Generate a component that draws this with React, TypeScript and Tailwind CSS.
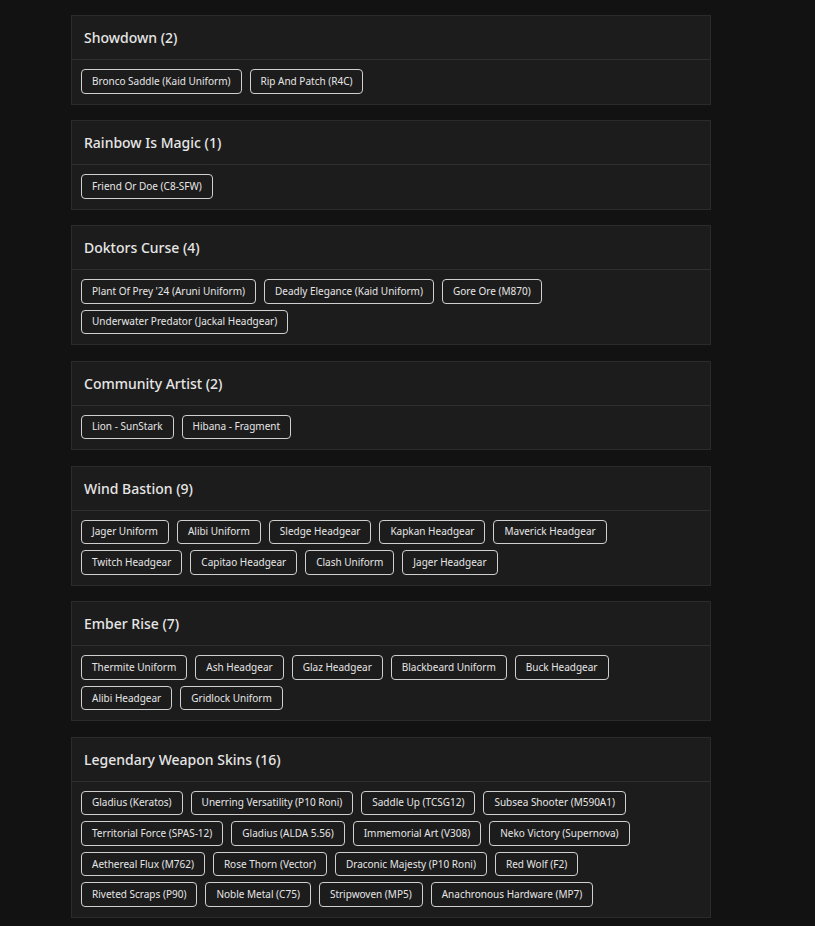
import React from "react";

const groups: { title: string; items: string[] }[] = [
  { title: "Showdown (2)", items: ["Bronco Saddle (Kaid Uniform)", "Rip And Patch (R4C)"] },
  { title: "Rainbow Is Magic (1)", items: ["Friend Or Doe (C8-SFW)"] },
  {
    title: "Doktors Curse (4)",
    items: [
      "Plant Of Prey '24 (Aruni Uniform)",
      "Deadly Elegance (Kaid Uniform)",
      "Gore Ore (M870)",
      "Underwater Predator (Jackal Headgear)",
    ],
  },
  { title: "Community Artist (2)", items: ["Lion - SunStark", "Hibana - Fragment"] },
  {
    title: "Wind Bastion (9)",
    items: [
      "Jager Uniform",
      "Alibi Uniform",
      "Sledge Headgear",
      "Kapkan Headgear",
      "Maverick Headgear",
      "Twitch Headgear",
      "Capitao Headgear",
      "Clash Uniform",
      "Jager Headgear",
    ],
  },
  {
    title: "Ember Rise (7)",
    items: [
      "Thermite Uniform",
      "Ash Headgear",
      "Glaz Headgear",
      "Blackbeard Uniform",
      "Buck Headgear",
      "Alibi Headgear",
      "Gridlock Uniform",
    ],
  },
  {
    title: "Legendary Weapon Skins (16)",
    items: [
      "Gladius (Keratos)",
      "Unerring Versatility (P10 Roni)",
      "Saddle Up (TCSG12)",
      "Subsea Shooter (M590A1)",
      "Territorial Force (SPAS-12)",
      "Gladius (ALDA 5.56)",
      "Immemorial Art (V308)",
      "Neko Victory (Supernova)",
      "Aethereal Flux (M762)",
      "Rose Thorn (Vector)",
      "Draconic Majesty (P10 Roni)",
      "Red Wolf (F2)",
      "Riveted Scraps (P90)",
      "Noble Metal (C75)",
      "Stripwoven (MP5)",
      "Anachronous Hardware (MP7)",
    ],
  },
];

function Card({ title, items }: { title: string; items: string[] }) {
  return (
    <div className="border border-[#2b2b2b] bg-[#1c1c1c]">
      <div className="flex h-[44px] items-center border-b border-[#2e2e2e] px-[12px]">
        <h3 className="text-[14px] font-medium text-[#e6e6e6]">{title}</h3>
      </div>
      <div className="flex flex-wrap gap-x-[8px] gap-y-[6px] px-[9px] pt-[9px] pb-[10px]">
        {items.map((it) => (
          <span
            key={it}
            className="flex h-[24.6px] items-center rounded-[4px] border border-[#cfcfcf] px-[10px] text-[10px] text-[#e6e6e6]"
          >
            {it}
          </span>
        ))}
      </div>
    </div>
  );
}

export default function App() {
  return (
    <div
      className="min-h-[926px] bg-[#121212] pl-[71px] pt-[15px] pb-[8px]"
      style={{ fontFamily: '"Noto Sans", "Open Sans", sans-serif' }}
    >
      <div className="flex w-[640px] flex-col gap-[15.4px]">
        {groups.map((g) => (
          <Card key={g.title} title={g.title} items={g.items} />
        ))}
      </div>
    </div>
  );
}
